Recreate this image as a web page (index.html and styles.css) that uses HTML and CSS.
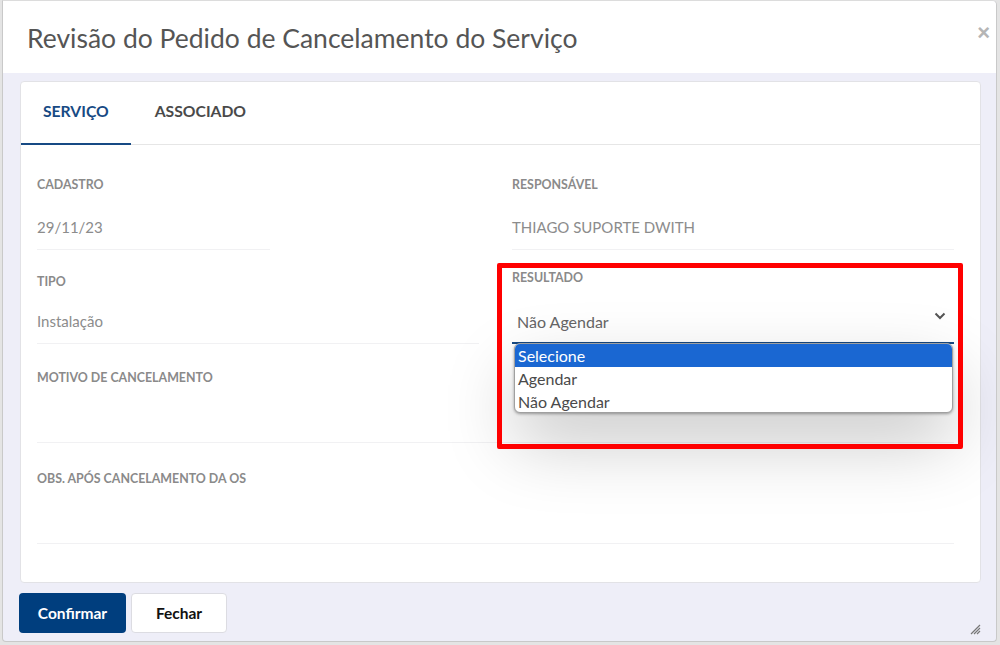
FILE: index.html
```html
<!DOCTYPE html>
<html lang="pt-BR">
<head>
    <meta charset="UTF-8">
    <meta name="viewport" content="width=device-width, initial-scale=1.0">
    <title>Revisão do Pedido de Cancelamento do Serviço</title>
    <link rel="stylesheet" href="styles.css">
</head>
<body>
    <div class="modal">
        <div class="modal-header">
            <h1 class="modal-title">Revisão do Pedido de Cancelamento do Serviço</h1>
            <button class="close-btn">×</button>
        </div>

        <div class="modal-body">
            <div class="card">
                <div class="tabs">
                    <div class="tab active">SERVIÇO</div>
                    <div class="tab">ASSOCIADO</div>
                </div>

                <div class="form-grid">
                    <div class="field row-1 short">
                        <div class="field-label">CADASTRO</div>
                        <div class="field-value">29/11/23</div>
                    </div>
                    <div class="field row-1">
                        <div class="field-label">RESPONSÁVEL</div>
                        <div class="field-value">THIAGO SUPORTE DWITH</div>
                    </div>

                    <div class="field row-2">
                        <div class="field-label">TIPO</div>
                        <div class="field-value">Instalação</div>
                    </div>
                    <div class="field row-2 select-field">
                        <div class="field-label">RESULTADO</div>
                        <div class="select-box">
                            <span>Não Agendar</span>
                            <svg class="chevron" width="12" height="8" viewBox="0 0 12 8">
                                <path d="M1.5 1.5 L6 6 L10.5 1.5" fill="none" stroke="#555" stroke-width="2"/>
                            </svg>
                        </div>
                        <ul class="select-list">
                            <li class="selected">Selecione</li>
                            <li>Agendar</li>
                            <li>Não Agendar</li>
                        </ul>
                        <div class="highlight"></div>
                    </div>

                    <div class="field row-3 wide">
                        <div class="field-label">MOTIVO DE CANCELAMENTO</div>
                        <div class="field-value"></div>
                    </div>

                    <div class="field row-4 wide">
                        <div class="field-label">OBS. APÓS CANCELAMENTO DA OS</div>
                        <div class="field-value"></div>
                    </div>
                </div>
            </div>

            <div class="modal-footer">
                <button class="btn btn-primary">Confirmar</button>
                <button class="btn btn-default">Fechar</button>
                <svg class="resize-grip" width="12" height="12" viewBox="0 0 12 12">
                    <path d="M11 2 L2 11 M11 5 L5 11 M11 8 L8 11" stroke="#777" stroke-width="1.2"/>
                </svg>
            </div>
        </div>
    </div>
</body>
</html>
```

FILE: styles.css
```css
* {
    margin: 0;
    padding: 0;
    box-sizing: border-box;
}

body {
    font-family: Lato, "Liberation Sans", sans-serif;
    background: #e4e4e4;
    width: 1000px;
    height: 645px;
    overflow: hidden;
}

.modal {
    margin-left: 2px;
    width: 995px;
    height: 642px;
    background: #eeeef8;
    border: 1px solid #c9c9c9;
    border-top-color: #dcdcdc;
    border-radius: 0 5px 4px 4px;
    display: flex;
    flex-direction: column;
    overflow: hidden;
}

.modal-header {
    height: 72px;
    background: #fff;
    display: flex;
    align-items: center;
    justify-content: space-between;
    padding: 0 6px 0 24px;
    flex-shrink: 0;
}

.modal-title {
    font-size: 26.5px;
    font-weight: 400;
    color: #555;
    margin-top: 1px;
}

.close-btn {
    border: none;
    background: none;
    color: #b5b5b5;
    font-size: 22px;
    font-weight: bold;
    font-family: "Liberation Sans", sans-serif;
    margin-top: -8px;
    cursor: pointer;
}

.modal-body {
    flex: 1;
    padding: 8px 15px 0 17px;
    display: flex;
    flex-direction: column;
}

.card {
    background: #fff;
    border: 1px solid #e2e2e6;
    border-radius: 4px;
    height: 502px;
}

.tabs {
    display: flex;
    height: 63px;
    border-bottom: 1px solid #e6e6e6;
}

.tab {
    padding: 0 22px 3px;
    display: flex;
    align-items: center;
    font-size: 15.7px;
    font-weight: 700;
    color: #4a4a4a;
    border-bottom: 2px solid transparent;
    margin-bottom: -1px;
}

.tab.active {
    color: #174a84;
    border-bottom-color: #174a84;
}

.tab + .tab {
    padding-left: 24px;
}

.form-grid {
    display: grid;
    grid-template-columns: 442px 442px;
    column-gap: 33px;
    padding-left: 16px;
}

.field {
    border-bottom: 1px solid #f1f1f3;
    padding-bottom: 12px;
    position: relative;
}

.field.short {
    width: 233px;
}

.field.wide {
    grid-column: 1 / 3;
}

.field-label {
    font-size: 12.4px;
    line-height: 16px;
    font-weight: 700;
    color: #8a8a8a;
}

.field-value {
    font-size: 15px;
    line-height: 20px;
    height: 20px;
    margin-top: 24px;
    color: #8c8c8c;
}

.row-1 { padding-top: 32px; }
.row-2 { padding-top: 24px; }
.row-2 .field-value { margin-top: 21px; }
.row-3 { padding-top: 26px; }
.row-4 { padding-top: 28px; }

.select-field {
    padding-top: 20px;
    border-bottom: 2px solid #174a84;
    padding-bottom: 10px;
}

.select-box {
    margin-top: 25px;
    height: 20px;
    display: flex;
    align-items: center;
    justify-content: space-between;
    padding: 0 8px 0 5px;
    font-size: 16px;
    color: #666;
}

.chevron {
    margin-top: -10px;
}

.select-list {
    list-style: none;
    position: absolute;
    top: 100%;
    left: 2px;
    right: 1px;
    margin-top: 1px;
    height: 70px;
    background: #fff;
    border: 1px solid #a0a0a0;
    border-radius: 6px;
    box-shadow: 0 1px 3px rgba(0,0,0,0.35), 0 30px 70px rgba(0,0,0,0.22);
    overflow: hidden;
    z-index: 2;
}

.select-list li {
    font-size: 16px;
    line-height: 23px;
    padding-left: 3px;
    color: #4a4a4a;
}

.select-list li.selected {
    background: #1a67d2;
    color: #fff;
}

.highlight {
    position: absolute;
    left: -15px;
    top: 13px;
    width: 466px;
    height: 186px;
    border: 5px solid #ff0000;
    border-radius: 2px;
    z-index: 3;
}

.modal-footer {
    display: flex;
    gap: 5px;
    padding-top: 10px;
    margin-left: -1px;
    position: relative;
    flex: 1;
}

.btn {
    height: 40px;
    border-radius: 4px;
    font-family: Lato, "Liberation Sans", sans-serif;
    font-size: 15.5px;
    font-weight: 700;
    cursor: pointer;
}

.btn-primary {
    width: 107px;
    background: #003e7e;
    color: #fff;
    border: none;
}

.btn-default {
    width: 96px;
    background: #fff;
    color: #111;
    border: 1px solid #dcdce2;
}

.resize-grip {
    position: absolute;
    right: 0;
    bottom: 6px;
}
```
